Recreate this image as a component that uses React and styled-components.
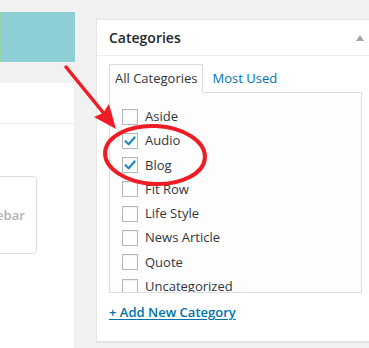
import React from "react";
import styled, { createGlobalStyle } from "styled-components";

const Global = createGlobalStyle`
  html, body { margin: 0; padding: 0; background: #f1f1f1; }
  body { font-family: "Open Sans", "Liberation Sans", sans-serif; }
`;

const Page = styled.div`
  position: relative;
  width: 369px;
  height: 348px;
  overflow: hidden;
  display: flex;
  align-items: flex-start;
  gap: 21px;
  background: #f1f1f1;
`;

const LeftCol = styled.div`
  width: 75px;
  flex: none;
  display: flex;
  flex-direction: column;
`;

const Teal = styled.div`
  margin-top: 12px;
  height: 50px;
  background: #8ecfd5;
  border-left: 1px dashed #9fd88c;
`;

const LeftPanel = styled.div`
  margin-top: 21px;
  width: 74px;
  height: 265px;
  background: #fff;
  display: flex;
  flex-direction: column;
`;

const LeftHead = styled.div`
  height: 40px;
  border-bottom: 1px solid #eaeaea;
`;

const WidgetCard = styled.div`
  margin-top: 52px;
  margin-left: -35px;
  width: 70px;
  height: 76px;
  border: 1px solid #dedede;
  border-radius: 4px;
  display: flex;
  align-items: center;
  justify-content: center;
  font-size: 13px;
  font-weight: 600;
  color: #aeb2b6;
`;

const Postbox = styled.div`
  margin-top: 19px;
  width: 290px;
  flex: none;
  height: 323px;
  box-sizing: border-box;
  background: #fff;
  border: 1px solid #e5e5e5;
  box-shadow: 0 1px 1px rgba(0, 0, 0, 0.04);
`;

const Header = styled.div`
  display: flex;
  align-items: center;
  justify-content: space-between;
  padding: 8px 12px;
  border-bottom: 1px solid #eeeeee;
`;

const Title = styled.h2`
  margin: 0;
  font-size: 14px;
  line-height: 19px;
  font-weight: 600;
  color: #23282d;
`;

const Toggle = styled.span`
  width: 0;
  height: 0;
  margin-right: 9px;
  border-left: 4px solid transparent;
  border-right: 4px solid transparent;
  border-bottom: 6px solid #a0a5aa;
`;

const Inside = styled.div`
  padding: 8px 12px 0;
`;

const Tabs = styled.div`
  display: flex;
  align-items: flex-end;
  position: relative;
  z-index: 1;
  margin-bottom: -1px;
`;

const Tab = styled.div`
  padding: 4px 5px;
  font-size: 13px;
  line-height: 19px;
  border: 1px solid ${(p) => (p.$active ? "#dddddd" : "transparent")};
  border-bottom-color: ${(p) => (p.$active ? "#fdfdfd" : "transparent")};
  background: ${(p) => (p.$active ? "#fdfdfd" : "transparent")};
  color: ${(p) => (p.$active ? "#32373c" : "#0073aa")};
  margin-left: ${(p) => (p.$active ? "0" : "3px")};
`;

const TabPanel = styled.div`
  width: 253px;
  height: 201px;
  box-sizing: border-box;
  border: 1px solid #dddddd;
  background: #fdfdfd;
  overflow: hidden;
`;

const List = styled.ul`
  list-style: none;
  margin: 0;
  padding: 14px 0 0 12px;
  display: flex;
  flex-direction: column;
  gap: 5.3px;
`;

const Item = styled.li`
  display: flex;
  align-items: center;
  gap: 7px;
  font-size: 13px;
  line-height: 19px;
  color: #32373c;
`;

const Box = styled.span`
  width: 16px;
  height: 16px;
  box-sizing: border-box;
  flex: none;
  border: 1px solid #b4b9be;
  background: #fff;
  box-shadow: inset 0 1px 2px rgba(0, 0, 0, 0.07);
  display: flex;
  align-items: center;
  justify-content: center;
`;

const AddLink = styled.a`
  display: inline-block;
  margin-top: 10px;
  font-size: 13px;
  line-height: 19px;
  font-weight: 600;
  color: #0073aa;
  text-decoration: underline;
  text-underline-offset: 2px;
`;

const Overlay = styled.svg`
  position: absolute;
  left: 0;
  top: 0;
  pointer-events: none;
`;

const Check = () => (
  <svg width="14" height="14" viewBox="0 0 14 14">
    <path d="M2.5 7.2 L5.6 10.2 L11.6 3.4" fill="none" stroke="#1e8cbe" strokeWidth="2.2" strokeLinecap="round" strokeLinejoin="round" />
  </svg>
);

const cats = [
  ["Aside", false],
  ["Audio", true],
  ["Blog", true],
  ["Fit Row", false],
  ["Life Style", false],
  ["News Article", false],
  ["Quote", false],
  ["Uncategorized", false],
];

export default function App() {
  return (
    <>
      <Global />
      <Page>
        <LeftCol>
          <Teal />
          <LeftPanel>
            <LeftHead />
            <WidgetCard>Sidebar</WidgetCard>
          </LeftPanel>
        </LeftCol>
        <Postbox>
          <Header>
            <Title>Categories</Title>
            <Toggle />
          </Header>
          <Inside>
            <Tabs>
              <Tab $active>All Categories</Tab>
              <Tab>Most Used</Tab>
            </Tabs>
            <TabPanel>
              <List>
                {cats.map(([name, checked]) => (
                  <Item key={name}>
                    <Box>{checked && <Check />}</Box>
                    {name}
                  </Item>
                ))}
              </List>
            </TabPanel>
            <AddLink href="#">+ Add New Category</AddLink>
          </Inside>
        </Postbox>
        <Overlay width="369" height="348" viewBox="0 0 369 348">
          <line x1="66" y1="67" x2="106" y2="116" stroke="#ee1c24" strokeWidth="3.5" strokeLinecap="round" />
          <polygon points="116,129 94,117 103,113 109,104" fill="#ee1c24" />
          <ellipse cx="155" cy="155" rx="50" ry="29" fill="none" stroke="#ee1c24" strokeWidth="4" transform="rotate(3 155 155)" />
        </Overlay>
      </Page>
    </>
  );
}
